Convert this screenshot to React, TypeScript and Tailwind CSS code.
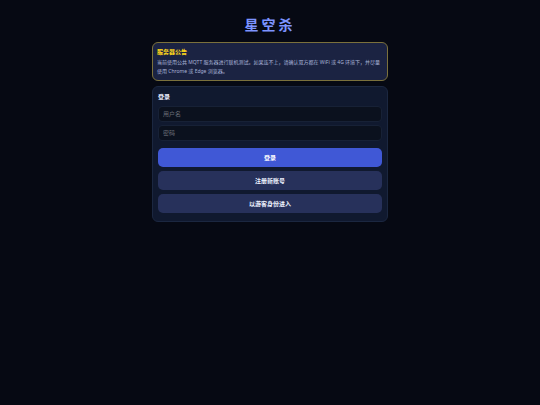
import type { ButtonHTMLAttributes, InputHTMLAttributes } from "react";

function Field(props: InputHTMLAttributes<HTMLInputElement>) {
  return (
    <input
      aria-label={props.placeholder}
      className="h-4 w-full rounded border border-[#172136] bg-[#0b111e] px-1 text-[6px] leading-[10px] text-[#eef1ff] outline-none placeholder:text-[#696d76]"
      {...props}
    />
  );
}

function Button({ primary = false, ...props }: ButtonHTMLAttributes<HTMLButtonElement> & { primary?: boolean }) {
  return (
    <button
      className={
        primary
          ? "h-[19px] w-full rounded-[5px] bg-[#4058d6] pt-px text-[6px] font-bold text-white"
          : "h-[19px] w-full rounded-[5px] bg-[#27315b] pt-px text-[6px] font-bold text-[#eef1ff]"
      }
      {...props}
    />
  );
}

export default function App() {
  return (
    <main className="min-h-screen bg-[#060913] px-4 pt-4 font-['Noto_Sans','Noto_Sans_CJK_SC',sans-serif] text-[#eef1ff]">
      <div className="mx-auto max-w-[236px]">
        <h1 className="mb-2 text-center text-[14px] leading-[18px] font-bold tracking-[3px] text-[#7d94ff]">星空杀</h1>

        <section className="mb-[5px] rounded-md border border-[#7b713c] bg-[#1b2342] px-1 pt-[5px] pb-1">
          <h2 className="mb-px text-[6px] leading-[9px] font-bold text-[#ffd91a]">服务器公告</h2>
          <p className="text-[5px] leading-[9px] text-[#a9b3d8]">
            当前使用公共 MQTT 服务器进行联机测试。如果连不上，请确认双方都在 WiFi 或 4G 环境下，并尽量使用 Chrome 或 Edge 浏览器。
          </p>
        </section>

        <form
          className="rounded-md border border-[#1b2740] bg-[#10192f] px-[5px] pt-[5px] pb-2"
          onSubmit={(e) => e.preventDefault()}
        >
          <h2 className="mb-1 text-[6px] leading-[10px] font-bold">登录</h2>
          <div className="mb-[7px] flex flex-col gap-[3px]">
            <Field placeholder="用户名" type="text" autoComplete="username" />
            <Field placeholder="密码" type="password" autoComplete="current-password" />
          </div>
          <div className="flex flex-col gap-1">
            <Button type="submit" primary>
              登录
            </Button>
            <Button type="button">注册新账号</Button>
            <Button type="button">以游客身份进入</Button>
          </div>
        </form>
      </div>
    </main>
  );
}
